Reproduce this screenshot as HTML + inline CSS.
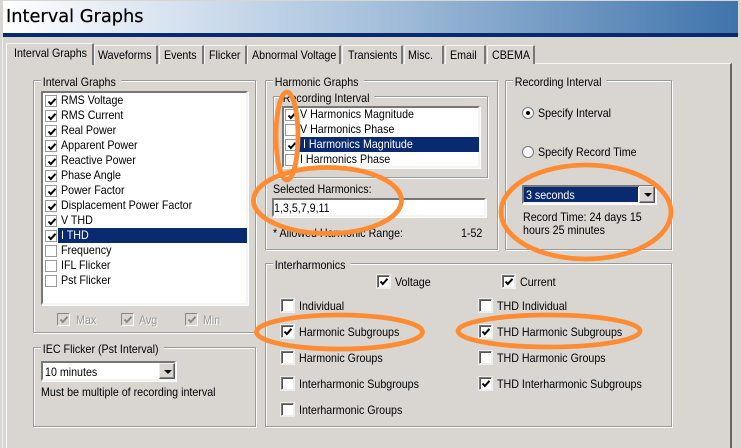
<!DOCTYPE html>
<html><head><meta charset="utf-8"><style>
html,body{margin:0;padding:0;width:741px;height:448px;overflow:hidden;background:#d9d6d1}
body{position:relative;font:12px/15px "Liberation Sans",sans-serif;color:#000}
div,span.t{position:absolute;box-sizing:border-box}
span.t{white-space:nowrap;height:15px;line-height:15px;transform:scaleX(.89);transform-origin:0 0}
.g{border:1px solid #9a9a9a;box-shadow:1px 1px 0 #fff,inset 1px 1px 0 #fff}
.l{background:#d9d6d1;padding:0 6px 0 2px;height:14px;line-height:14px;white-space:nowrap;transform:scaleX(.89);transform-origin:0 0}
.sunk{background:#fff;border:2px solid;border-color:#777 #f4f4f4 #f4f4f4 #777;box-shadow:1px 1px 0 #fff}
.cb{width:13px;height:13px;background:#fff;border:1px solid;border-color:#777 #eee #eee #777;box-shadow:inset 1px 1px 0 #555,0 0 0 1px #eee}
.cl{width:12px;height:12px;background:#fff;border:1px solid #999}
.cb svg,.cl svg{position:absolute;left:0;top:0}
.dis{background:#d9d6d1;width:13px;height:13px;border:1px solid;border-color:#888 #fff #fff #888}
.btn{background:#d9d6d1;border:1px solid;border-color:#eee #555 #555 #eee;box-shadow:inset -1px -1px 0 #888}
.arr{width:0;height:0;border:4px solid transparent;border-top:4px solid #000;border-bottom:0;left:4px;top:6px}
.tab{background:#d9d6d1;border:1px solid #f6f6f6;border-bottom:0;border-right:2px solid #777;border-radius:2px 2px 0 0}
.dt{color:#999;text-shadow:1px 1px 0 #fff}
.w{color:#fff}
</style></head><body>
<svg width="0" height="0" style="position:absolute"><defs>
<path id="c" d="M2.5 5.5L4.8 8L9.5 2.8" fill="none" stroke="#000" stroke-width="2"/>
<path id="d" d="M2.5 5.5L4.8 8L9.5 2.8" fill="none" stroke="#8a8a8a" stroke-width="2"/>
</defs></svg>

<!-- header -->
<div style="left:3px;top:1px;width:735px;height:32px;background:linear-gradient(90deg,#fff 0%,#a7c1dc 50%,#3f74ab 100%)"></div>
<div style="left:3px;top:33px;width:735px;height:4px;background:#0a2a70"></div>
<span class="t" style="left:6px;top:6px;height:22px;line-height:22px;font:17.8px/22px 'DejaVu Sans',sans-serif;color:#000;-webkit-text-stroke:.2px #000;transform:none">Interval Graphs</span>

<!-- page -->
<div style="left:6px;top:63px;width:726px;height:400px;border-top:1px solid #f6f6f6;border-left:1px solid #f6f6f6;border-right:2px solid #666"></div>
<div style="left:2px;top:37px;width:1px;height:411px;background:#eee"></div>

<!-- tabs -->
<div class="tab" style="left:94px;top:45px;width:64px;height:19px"></div>
<div class="tab" style="left:159px;top:45px;width:45px;height:19px"></div>
<div class="tab" style="left:204px;top:45px;width:43px;height:19px"></div>
<div class="tab" style="left:247px;top:45px;width:94px;height:19px"></div>
<div class="tab" style="left:342px;top:45px;width:61px;height:19px"></div>
<div class="tab" style="left:404px;top:45px;width:40px;height:19px"></div>
<div class="tab" style="left:445px;top:45px;width:41px;height:19px"></div>
<div class="tab" style="left:487px;top:45px;width:48px;height:19px"></div>
<div class="tab" style="left:6px;top:43px;width:88px;height:22px;border-right-width:2px"></div>
<span class="t" style="left:14px;top:46px">Interval Graphs</span>
<span class="t" style="left:98px;top:48px">Waveforms</span>
<span class="t" style="left:164px;top:48px">Events</span>
<span class="t" style="left:209px;top:48px">Flicker</span>
<span class="t" style="left:252px;top:48px">Abnormal Voltage</span>
<span class="t" style="left:348px;top:48px">Transients</span>
<span class="t" style="left:408px;top:48px">Misc.</span>
<span class="t" style="left:450px;top:48px">Email</span>
<span class="t" style="left:492px;top:48px">CBEMA</span>

<!-- Interval Graphs group -->
<div class="g" style="left:33px;top:80px;width:223px;height:253px"></div>
<div class="l" style="left:41px;top:75px">Interval Graphs</div>
<div class="sunk" style="left:41px;top:91px;width:207px;height:214px"></div>
<div style="left:58px;top:228px;width:189px;height:15px;background:#0a2a70"></div>
<span class="t" style="left:61px;top:93px">RMS Voltage</span>
<span class="t" style="left:61px;top:108px">RMS Current</span>
<span class="t" style="left:61px;top:123px">Real Power</span>
<span class="t" style="left:61px;top:138px">Apparent Power</span>
<span class="t" style="left:61px;top:153px">Reactive Power</span>
<span class="t" style="left:61px;top:168px">Phase Angle</span>
<span class="t" style="left:61px;top:183px">Power Factor</span>
<span class="t" style="left:61px;top:198px">Displacement Power Factor</span>
<span class="t" style="left:61px;top:213px">V THD</span>
<span class="t w" style="left:61px;top:228px">I THD</span>
<span class="t" style="left:61px;top:243px">Frequency</span>
<span class="t" style="left:61px;top:258px">IFL Flicker</span>
<span class="t" style="left:61px;top:273px">Pst Flicker</span>
<div class="cl" style="left:45px;top:95px"><svg width="11" height="11"><use href="#c"/></svg></div>
<div class="cl" style="left:45px;top:110px"><svg width="11" height="11"><use href="#c"/></svg></div>
<div class="cl" style="left:45px;top:125px"><svg width="11" height="11"><use href="#c"/></svg></div>
<div class="cl" style="left:45px;top:140px"><svg width="11" height="11"><use href="#c"/></svg></div>
<div class="cl" style="left:45px;top:155px"><svg width="11" height="11"><use href="#c"/></svg></div>
<div class="cl" style="left:45px;top:170px"><svg width="11" height="11"><use href="#c"/></svg></div>
<div class="cl" style="left:45px;top:185px"><svg width="11" height="11"><use href="#c"/></svg></div>
<div class="cl" style="left:45px;top:200px"><svg width="11" height="11"><use href="#c"/></svg></div>
<div class="cl" style="left:45px;top:215px"><svg width="11" height="11"><use href="#c"/></svg></div>
<div class="cl" style="left:45px;top:230px"><svg width="11" height="11"><use href="#c"/></svg></div>
<div class="cl" style="left:45px;top:245px"></div>
<div class="cl" style="left:45px;top:260px"></div>
<div class="cl" style="left:45px;top:275px"></div>
<div class="dis" style="left:57px;top:313px"><svg width="11" height="11" style="position:absolute;left:0;top:0"><use href="#d"/></svg></div>
<div class="dis" style="left:121px;top:313px"><svg width="11" height="11" style="position:absolute;left:0;top:0"><use href="#d"/></svg></div>
<div class="dis" style="left:185px;top:313px"><svg width="11" height="11" style="position:absolute;left:0;top:0"><use href="#d"/></svg></div>
<span class="t dt" style="left:76px;top:313px">Max</span>
<span class="t dt" style="left:139px;top:313px">Avg</span>
<span class="t dt" style="left:203px;top:313px">Min</span>

<!-- IEC -->
<div class="g" style="left:33px;top:347px;width:223px;height:80px"></div>
<div class="l" style="left:41px;top:342px">IEC Flicker (Pst Interval)</div>
<div class="sunk" style="left:41px;top:361px;width:135px;height:20px"></div>
<span class="t" style="left:45px;top:365px">10 minutes</span>
<div class="btn" style="left:159px;top:363px;width:16px;height:16px"><div class="arr"></div></div>
<span class="t" style="left:41px;top:385px">Must be multiple of recording interval</span>

<!-- Harmonic Graphs -->
<div class="g" style="left:265px;top:80px;width:233px;height:170px"></div>
<div class="l" style="left:273px;top:75px">Harmonic Graphs</div>
<div class="g" style="left:273px;top:96px;width:215px;height:82px"></div>
<div class="l" style="left:281px;top:91px">Recording Interval</div>
<div class="sunk" style="left:282px;top:106px;width:198px;height:62px"></div>
<div style="left:299px;top:137px;width:180px;height:15px;background:#0a2a70"></div>
<span class="t" style="left:300px;top:107px">V Harmonics Magnitude</span>
<span class="t" style="left:300px;top:122px">V Harmonics Phase</span>
<span class="t w" style="left:303px;top:137px">I Harmonics Magnitude</span>
<span class="t" style="left:300px;top:152px">I Harmonics Phase</span>
<div class="cl" style="left:285px;top:109px"><svg width="11" height="11"><use href="#c"/></svg></div>
<div class="cl" style="left:285px;top:124px"></div>
<div class="cl" style="left:285px;top:139px"><svg width="11" height="11"><use href="#c"/></svg></div>
<div class="cl" style="left:285px;top:154px"></div>
<span class="t" style="left:273px;top:182px">Selected Harmonics:</span>
<div class="sunk" style="left:272px;top:198px;width:214px;height:19px"></div>
<span class="t" style="left:274px;top:201px">1,3,5,7,9,11</span>
<span class="t" style="left:273px;top:226px">* Allowed Harmonic Range:</span>
<span class="t" style="left:461px;top:226px">1-52</span>

<!-- Recording Interval -->
<div class="g" style="left:505px;top:80px;width:167px;height:170px"></div>
<div class="l" style="left:513px;top:75px">Recording Interval</div>
<svg style="position:absolute;left:521px;top:106px" width="14" height="14"><circle cx="7" cy="7" r="5.5" fill="#fff" stroke="#777"/><circle cx="7" cy="7" r="2" fill="#000"/></svg>
<svg style="position:absolute;left:521px;top:145px" width="14" height="14"><circle cx="7" cy="7" r="5.5" fill="#fff" stroke="#777"/></svg>
<span class="t" style="left:538px;top:106px">Specify Interval</span>
<span class="t" style="left:538px;top:145px">Specify Record Time</span>
<div class="sunk" style="left:522px;top:185px;width:134px;height:19px"></div>
<div style="left:524px;top:187px;width:114px;height:15px;background:#0a2a70"></div>
<span class="t w" style="left:526px;top:188px">3 seconds</span>
<div class="btn" style="left:639px;top:186px;width:16px;height:17px"><div class="arr"></div></div>
<span class="t" style="left:523px;top:210px">Record Time: 24 days 15</span>
<span class="t" style="left:523px;top:223px">hours 25 minutes</span>

<!-- Interharmonics -->
<div class="g" style="left:265px;top:263px;width:407px;height:164px"></div>
<div class="l" style="left:273px;top:258px">Interharmonics</div>
<div class="cb" style="left:377px;top:275px"><svg width="11" height="11"><use href="#c"/></svg></div>
<span class="t" style="left:395px;top:275px">Voltage</span>
<div class="cb" style="left:502px;top:275px"><svg width="11" height="11"><use href="#c"/></svg></div>
<span class="t" style="left:520px;top:275px">Current</span>
<div class="cb" style="left:281px;top:299px"></div><span class="t" style="left:299px;top:299px">Individual</span>
<div class="cb" style="left:281px;top:325px"><svg width="11" height="11"><use href="#c"/></svg></div><span class="t" style="left:299px;top:325px">Harmonic Subgroups</span>
<div class="cb" style="left:281px;top:351px"></div><span class="t" style="left:299px;top:351px">Harmonic Groups</span>
<div class="cb" style="left:281px;top:377px"></div><span class="t" style="left:299px;top:377px">Interharmonic Subgroups</span>
<div class="cb" style="left:281px;top:403px"></div><span class="t" style="left:299px;top:403px">Interharmonic Groups</span>
<div class="cb" style="left:479px;top:299px"></div><span class="t" style="left:497px;top:299px">THD Individual</span>
<div class="cb" style="left:479px;top:325px"><svg width="11" height="11"><use href="#c"/></svg></div><span class="t" style="left:497px;top:325px">THD Harmonic Subgroups</span>
<div class="cb" style="left:479px;top:351px"></div><span class="t" style="left:497px;top:351px">THD Harmonic Groups</span>
<div class="cb" style="left:479px;top:377px"><svg width="11" height="11"><use href="#c"/></svg></div><span class="t" style="left:497px;top:377px">THD Interharmonic Subgroups</span>

<!-- annotations -->
<svg style="position:absolute;left:0;top:0" width="741" height="448" fill="none" stroke="#ff8c33" stroke-width="4.8">
<ellipse cx="287" cy="136" rx="11" ry="44"/>
<ellipse cx="327.5" cy="200.5" rx="74" ry="33"/>
<ellipse cx="586" cy="212" rx="85" ry="47"/>
<ellipse cx="339.5" cy="332" rx="83" ry="17"/>
<ellipse cx="549" cy="331" rx="91" ry="16"/>
</svg>
</body></html>
